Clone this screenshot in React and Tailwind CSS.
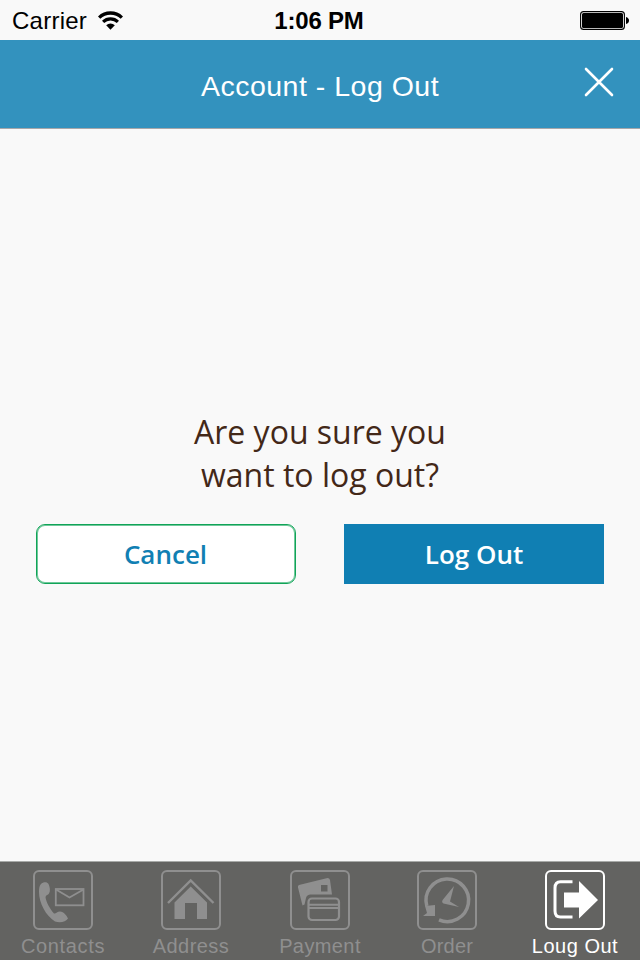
import React from "react";

const HELV = "font-['Liberation_Sans',Arial,sans-serif]";

function Frame({ children }) {
  return (
    <svg className="block size-[60px] shrink-0" viewBox="0 0 60 60" fill="none" stroke="currentColor">
      <rect x="1" y="1" width="58" height="58" rx="5" strokeWidth="2" />
      {children}
    </svg>
  );
}

function ContactsIcon() {
  return (
    <Frame>
      <path
        d="M8 14C10 12 14 11.5 15.5 14C17 17 17.500 21 16 23.500C15 25 13 25 12.500 27C13 32 17 39 21 43.500C23 44 24 41.500 27 41.500C31 42 33.500 45 35 48.500C33 52 27 53 22 51.500C13 46 6 33 6 22C6 18 6.500 15.500 8 14Z"
        fill="currentColor"
        stroke="none"
      />
      <rect x="22.800" y="19" width="27.700" height="16.300" strokeWidth="1.800" />
      <path d="M23 19.500L36.500 27.500L50.500 19.500" strokeWidth="1.800" />
    </Frame>
  );
}

function AddressIcon() {
  return (
    <Frame>
      <path d="M7 33L29.700 10.500L52.500 33" strokeWidth="2.400" />
      <path d="M29.700 16.500L46 32.500V49H36V33H24V49H13.500V32.500Z" fill="currentColor" stroke="none" />
    </Frame>
  );
}

function PaymentIcon() {
  return (
    <Frame>
      <path
        fillRule="evenodd"
        d="M9 15L37.500 8Q39.500 8 40 10L42 24.500H20Q16.500 25 16 28L14.500 34.500L12.500 35.500L8 17.500Q7.500 15.500 9 15ZM31 15V21.500H37.500V15Z"
        fill="currentColor"
        stroke="none"
      />
      <rect x="18.500" y="28.500" width="30.500" height="21.500" rx="3.500" strokeWidth="2.200" />
      <path d="M18.500 34.800H49M18.500 38H49" strokeWidth="1.900" />
    </Frame>
  );
}

function OrderIcon() {
  return (
    <Frame>
      <path d="M9.800 36A21.300 21.300 0 1 1 22 49.900" strokeWidth="3.500" />
      <path d="M6 46L10 43L8 36L18 35V46Z" fill="currentColor" stroke="none" />
      <path d="M37 16L33 31.500L42 37L26.500 33.500Q24 32 26 29.500Z" fill="currentColor" stroke="none" />
    </Frame>
  );
}

function LogOutIcon() {
  return (
    <Frame>
      <path d="M27.500 11.800H15.500Q10 11.800 10 18V41Q10 47 15.500 47H27.500" strokeWidth="3" />
      <path d="M19 22.500H34V11L53 30L34 48.500V37.500H19Z" fill="currentColor" stroke="none" />
    </Frame>
  );
}

const tabs = [
  { label: "Contacts", Icon: ContactsIcon, width: "w-[126px]", track: "tracking-[0.65px]" },
  { label: "Address", Icon: AddressIcon, width: "w-[130px]", track: "tracking-[0.45px]" },
  { label: "Payment", Icon: PaymentIcon, width: "w-[128px]", track: "tracking-[0.4px]" },
  { label: "Order", Icon: OrderIcon, width: "w-[126px]", track: "tracking-[0.2px]" },
  { label: "Loug Out", Icon: LogOutIcon, width: "w-[130px]", track: "tracking-[0.5px]", active: true },
];

export default function App() {
  return (
    <div className={`flex h-[960px] w-[640px] flex-col overflow-hidden bg-[#f9f9f9] ${HELV}`}>
      <div className="grid h-10 shrink-0 grid-cols-3 items-center pl-3 pr-[11px] text-black">
        <div className="flex items-center gap-[11px]">
          <span className="pt-[2px] text-[24px] leading-[38px] tracking-[0.25px]">Carrier</span>
          <svg className="block h-[19px] w-[25px]" viewBox="0 0 26 19" fill="none" stroke="currentColor">
            <path d="M1.200 6.500A17 17 0 0 1 24.800 6.500" strokeWidth="3.500" />
            <path d="M5.300 10.900A11.200 11.200 0 0 1 20.700 10.900" strokeWidth="3.300" />
            <path d="M8.500 14.500A6.500 6.500 0 0 1 17.500 14.500L13 19Z" fill="currentColor" stroke="none" />
          </svg>
        </div>
        <span className="pr-[3px] pt-[2px] text-center text-[24px] font-bold leading-[38px] tracking-[-0.2px]">1:06 PM</span>
        <svg className="block h-[19px] w-[49px] justify-self-end" viewBox="0 0 49 19">
          <rect x="0.600" y="0.600" width="43.800" height="17.800" rx="3" fill="none" stroke="black" strokeWidth="1.100" />
          <rect x="2" y="2" width="41" height="15" rx="1.500" />
          <path d="M46 6Q49 7 49 9.500T46 13Z" />
        </svg>
      </div>

      <header className="grid h-[89px] shrink-0 grid-cols-[1fr_auto_1fr] items-center border-b border-[#a7a7aa] bg-[#3392be] text-white">
        <span />
        <h1 className="pt-[4px] text-[28.500px] font-normal leading-[40px] tracking-[0.5px]">Account - Log Out</h1>
        <button className="mb-[5px] mr-[26px] justify-self-end" aria-label="Close">
          <svg className="block size-[30px]" viewBox="0 0 30 30" stroke="currentColor" strokeWidth="2.600" strokeLinecap="round">
            <path d="M2 2L28 28M28 2L2 28" />
          </svg>
        </button>
      </header>

      <main className="flex flex-1 flex-col px-9 pt-[281px] font-['Open_Sans',sans-serif]">
        <p className="text-center text-[32px] leading-[43px] text-[#432818]">
          Are you sure you
          <br />
          want to log out?
        </p>
        <div className="mt-[28px] flex gap-12">
          <button className="h-[60px] w-[260px] rounded-[9px] border border-[#10a458] bg-white py-0 pl-0 pr-[1px] text-[26px] font-semibold leading-none text-[#117fb3] shadow-[inset_0_0_0_1px_#70c89a]">
            Cancel
          </button>
          <button className="h-[60px] w-[260px] bg-[#107fb3] text-[26px] font-semibold leading-none text-white">
            Log Out
          </button>
        </div>
      </main>

      <nav className="flex h-[99px] shrink-0 border-t border-[#a8aaa8] bg-[#636361]">
        {tabs.map(({ label, Icon, width, track, active }) => (
          <button
            key={label}
            className={`flex flex-col items-center pt-2 ${width} ${active ? "text-white" : "text-[#8f8f8f]"}`}
          >
            <Icon />
            <span className={`mt-[4px] whitespace-nowrap text-[20px] leading-6 ${track}`}>{label}</span>
          </button>
        ))}
      </nav>
    </div>
  );
}
